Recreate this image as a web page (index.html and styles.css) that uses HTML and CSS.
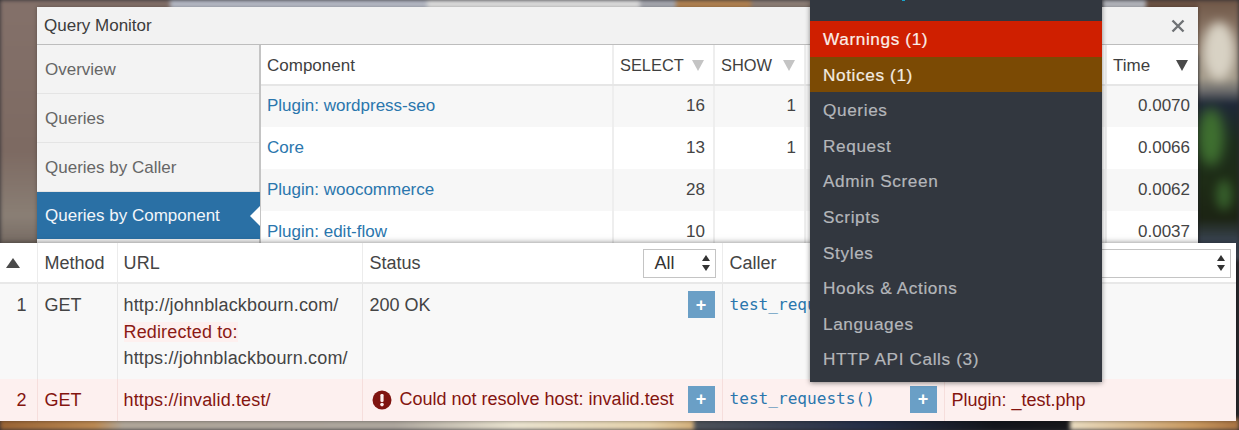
FILE: index.html
```html
<!DOCTYPE html>
<html lang="en">
<head>
<meta charset="utf-8">
<title>Query Monitor</title>
<link rel="stylesheet" href="styles.css">
</head>
<body>
<div class="photo">
  <i class="p1"></i><i class="p2"></i><i class="p2b"></i><i class="p3"></i><i class="p3b"></i><i class="p4"></i>
  <i class="p5"></i><i class="p5a"></i><i class="p5b"></i><i class="p5d"></i><i class="p5c"></i><i class="p5e"></i>
  <i class="p6"></i><i class="p6b"></i><i class="p7"></i><i class="p8"></i>
</div>

<section class="panel">
  <header class="panel-title">
    <span>Query Monitor</span>
    <svg class="close" viewBox="0 0 14 14" width="14" height="14"><path d="M1.5 1.5l11 11M12.5 1.5l-11 11" stroke="#6f7275" stroke-width="2.4" fill="none"/></svg>
  </header>
  <div class="panel-body">
    <nav class="side">
      <a class="side-item">Overview</a>
      <a class="side-item">Queries</a>
      <a class="side-item">Queries by Caller</a>
      <a class="side-item active">Queries by Component</a>
    </nav>
    <table class="qtable">
      <colgroup><col class="c-comp"><col class="c-sel"><col class="c-show"><col class="c-hid"><col></colgroup>
      <thead>
        <tr>
          <th>Component</th>
          <th class="th-caps"><span class="th-sort">SELECT<i class="tri-d light"></i></span></th>
          <th class="th-caps"><span class="th-sort">SHOW<i class="tri-d light"></i></span></th>
          <th></th>
          <th class="th-time"><span class="th-sort">Time<i class="tri-d dark"></i></span></th>
        </tr>
      </thead>
      <tbody>
        <tr><td><a>Plugin: wordpress-seo</a></td><td class="num">16</td><td class="num">1</td><td></td><td class="num">0.0070</td></tr>
        <tr><td><a>Core</a></td><td class="num">13</td><td class="num">1</td><td></td><td class="num">0.0066</td></tr>
        <tr><td><a>Plugin: woocommerce</a></td><td class="num">28</td><td class="num"></td><td></td><td class="num">0.0062</td></tr>
        <tr><td><a>Plugin: edit-flow</a></td><td class="num">10</td><td class="num"></td><td></td><td class="num">0.0037</td></tr>
      </tbody>
    </table>
  </div>
</section>

<section class="requests">
  <table class="rtable">
    <colgroup><col class="r-n"><col class="r-m"><col class="r-u"><col class="r-s"><col class="r-c"><col></colgroup>
    <thead>
      <tr>
        <th class="sort-cell"><i class="tri-u"></i></th>
        <th>Method</th>
        <th class="url">URL</th>
        <th><div class="th-filter">Status<span class="select sel-short">All<i class="updown"></i></span></div></th>
        <th>Caller</th>
        <th><span class="select sel-wide"><i class="updown"></i></span></th>
      </tr>
    </thead>
    <tbody>
      <tr class="row-ok">
        <td class="num">1</td>
        <td>GET</td>
        <td class="url">http://johnblackbourn.com/<br><span class="redir">Redirected to:</span><br>https://johnblackbourn.com/</td>
        <td><div class="cell-btn">200 OK<b class="plus">+</b></div></td>
        <td><code>test_requests()</code></td>
        <td></td>
      </tr>
      <tr class="row-err">
        <td class="num">2</td>
        <td>GET</td>
        <td class="url">https://invalid.test/</td>
        <td><div class="cell-btn"><span class="err"><svg viewBox="0 0 20 20" width="20" height="20"><circle cx="10" cy="10" r="9.5" fill="#7f1410"/><rect x="8.4" y="4" width="3.2" height="8" rx="1.2" fill="#fdf0ef"/><circle cx="10" cy="14.6" r="1.8" fill="#fdf0ef"/></svg>Could not resolve host: invalid.test</span><b class="plus">+</b></div></td>
        <td><div class="cell-btn"><code>test_requests()</code><b class="plus">+</b></div></td>
        <td>Plugin: _test.php</td>
      </tr>
    </tbody>
  </table>
</section>

<aside class="menu">
  <ul>
    <li class="warn">Warnings (1)</li>
    <li class="notice">Notices (1)</li>
    <li>Queries</li>
    <li>Request</li>
    <li>Admin Screen</li>
    <li>Scripts</li>
    <li>Styles</li>
    <li>Hooks &amp; Actions</li>
    <li>Languages</li>
    <li>HTTP API Calls (3)</li>
  </ul>
</aside>
</body>
</html>
```
FILE: styles.css
```css
* { box-sizing: border-box; }
html, body { margin: 0; height: 100%; }
body {
  position: relative;
  width: 1239px;
  height: 430px;
  overflow: hidden;
  font-family: "Liberation Sans", Arial, sans-serif;
  font-size: 17px;
  color: #444;
  background: #2b2b30;
}
.photo { position: absolute; inset: 0; overflow: hidden; filter: blur(2px); }
.photo i { position: absolute; display: block; }
.p1 { left: -5px; top: -5px; width: 175px; height: 260px; background: linear-gradient(180deg, #84716a, #7d6a62 60%, #8a7f75 85%, #6f635c); }
.p2 { left: 170px; top: -5px; width: 257px; height: 30px; background: #b8bcc8; }
.p2b { left: 427px; top: -5px; width: 213px; height: 30px; background: #e0e0e0; }
.p3 { left: 640px; top: -5px; width: 36px; height: 30px; background: #a8aab2; }
.p3b { left: 676px; top: -5px; width: 75px; height: 30px; background: #b48452; }
.p4 { left: 751px; top: -5px; width: 100px; height: 30px; background: #8f8078; }
.p5 { left: 1102px; top: -5px; width: 44px; height: 30px; background: #b6b8bf; }
.p5a { left: 1146px; top: -5px; width: 60px; height: 60px; background: #6d5344; }
.p5b { left: 1198px; top: 0; width: 50px; height: 260px; background: linear-gradient(180deg, #6f5646 0, #8a7666 12%, #a39a8a 30%, #6c6c6c 35%, #1f2838 40%, #1c2c1c 55%, #1e2c16 70%, #1c2414 84%, #3f4a5c 94%, #4c5566 100%); }
.p5d { left: 1203px; top: 22px; width: 32px; height: 58px; border-radius: 50%; background: #d8d2c4; filter: blur(5px); }
.p5c { left: 1198px; top: 108px; width: 26px; height: 58px; border-radius: 50%; background: #3f7030; filter: blur(6px); }
.p5e { left: 1216px; top: 180px; width: 16px; height: 30px; border-radius: 50%; background: #37602c; filter: blur(5px); }
.p6 { left: -5px; top: 418px; width: 400px; height: 20px; background: linear-gradient(90deg, #9c6434, #c08d55 25%, #b5ab9e 32%, #b3aca3); }
.p6b { left: 395px; top: 418px; width: 299px; height: 20px; background: linear-gradient(90deg, #b3aca3, #f1ead6 40%, #ecd8b0 85%, #d9b47e); }
.p7 { left: 694px; top: 418px; width: 376px; height: 20px; background: linear-gradient(90deg, #50545c, #26304a 45%, #14161c 80%, #17171b); }
.p8 { left: 1070px; top: 418px; width: 175px; height: 20px; background: linear-gradient(90deg, #f1e3c6, #cf9e63 70%, #a87040); }

/* Query panel window */
.panel {
  position: absolute;
  left: 37px;
  top: 7px;
  width: 1161px;
  height: 237px;
  background: #fff;
  box-shadow: 0 0 4px rgba(0,0,0,.3);
  overflow: hidden;
}
.panel-title {
  display: flex;
  align-items: center;
  justify-content: space-between;
  height: 38px;
  padding: 1px 13px 0 7px;
  background: #f2f2f2;
  border-bottom: 1px solid #bdbdbd;
  color: #3c3c3c;
}
.close { display: block; }
.panel-body { display: flex; height: 199px; }
.side {
  flex: 0 0 224px;
  background: #f3f3f3;
  border-right: 2px solid #c4c4c4;
  display: flex;
  flex-direction: column;
}
.side-item {
  display: flex;
  align-items: center;
  height: 49px;
  padding: 2px 8px 0;
  color: #666;
  border-bottom: 1px solid #e4e4e4;
}
.side-item.active {
  position: relative;
  height: 47px;
  margin-right: -1px;
  padding-top: 0;
  background: #2a70a5;
  color: #f2f6fa;
  border-bottom: 0;
}
.side-item.active::after {
  content: "";
  position: absolute;
  right: 0;
  top: 14px;
  border: 10px solid transparent;
  border-right: 10px solid #fff;
  border-left: 0;
}
.qtable {
  flex: 1 1 auto;
  table-layout: fixed;
  border-collapse: collapse;
  height: 0;
}
.c-comp { width: 352px; }
.c-sel { width: 101px; }
.c-show { width: 91px; }
.c-hid { width: 301px; }
.qtable th {
  height: 40px;
  padding: 2px 9px 0 7px;
  text-align: left;
  font-weight: 400;
  color: #3f3f3f;
  border-bottom: 2px solid #e6e6e6;
  border-left: 2px solid #eeeeee;
}
.qtable .th-caps { padding-left: 6px; font-size: 16.4px; }
.qtable .th-time { padding-left: 6px; padding-right: 10px; }
.qtable th:first-child, .qtable td:first-child { border-left: 0; padding-left: 6px; }
.qtable td {
  height: 42px;
  padding: 0 8px 1px;
  border-left: 2px solid #eeeeee;
  color: #444;
}
.qtable tbody tr:nth-child(odd) td { background: #f7f7f7; }
.qtable a { color: #2a76ad; }
.num { text-align: right; }
.th-sort { display: flex; align-items: center; justify-content: space-between; }
.tri-d {
  display: block;
  width: 0;
  height: 0;
  border-left: 6.5px solid transparent;
  border-right: 6.5px solid transparent;
  border-top: 11px solid #c4c4c4;
  margin-left: 8px;
}
.tri-d.dark { border-top-color: #4a4a4a; }
.tri-u {
  display: block;
  width: 0;
  height: 0;
  margin: 0 auto 0 6px;
  border-left: 7px solid transparent;
  border-right: 7px solid transparent;
  border-bottom: 10px solid #4a4a4a;
}

/* Requests window */
.requests {
  position: absolute;
  left: 0;
  top: 243px;
  width: 1236px;
  height: 177px;
  background: #fff;
  box-shadow: 0 0 6px rgba(0,0,0,.5);
}
.rtable { width: 100%; height: 100%; table-layout: fixed; border-collapse: collapse; font-size: 18px; }
.r-n { width: 37px; }
.r-m { width: 80px; }
.r-u { width: 245px; }
.r-s { width: 360px; }
.r-c { width: 222px; }
.rtable th {
  height: 40px;
  padding: 1px 7px 0;
  text-align: left;
  font-weight: 400;
  color: #444;
  border-left: 1px solid #ececec;
  border-bottom: 2px solid #e8e8e8;
}
.rtable th.sort-cell { padding: 0; }
.rtable th:first-child, .rtable td:first-child { border-left: 0; }
.rtable td {
  padding: 8px 7px 7px;
  vertical-align: top;
  border-left: 1px solid #e6e6e6;
  line-height: 26.5px;
  color: #444;
}
.rtable td.num { padding-right: 10px; }
.rtable .url { padding-left: 6px; letter-spacing: .15px; white-space: nowrap; }
.row-ok { height: 95px; }
.row-ok td { background: #f8f8f8; }
.row-err { height: 42px; }
.row-err td { background: #fdf0ef; color: #84150f; border-left-color: #f6dedc; }
.redir { background: #fdf0ef; color: #8b1a15; }
.th-filter { display: flex; align-items: center; justify-content: space-between; }
.select {
  display: flex;
  align-items: center;
  justify-content: space-between;
  height: 29px;
  padding: 0 5px 0 11px;
  border: 1.5px solid #c4c4c4;
  color: #333;
  background: #fff;
}
.sel-short { width: 73px; margin-right: -1px; }
.sel-wide { width: 279px; }
.sel-wide .updown { margin-left: auto; }
.updown { position: relative; display: block; width: 8px; height: 16px; }
.updown::before, .updown::after {
  content: "";
  position: absolute;
  left: 0;
  border-left: 4px solid transparent;
  border-right: 4px solid transparent;
}
.updown::before { top: 0; border-bottom: 6px solid #333; }
.updown::after { bottom: 0; border-top: 6px solid #333; }
.cell-btn { display: flex; justify-content: space-between; align-items: flex-start; }
.plus {
  display: flex;
  align-items: center;
  justify-content: center;
  flex: 0 0 27px;
  width: 27px;
  height: 27px;
  margin: -1px 0 0;
  background: #6a9fc6;
  color: #fff;
  font-size: 18px;
  line-height: 1;
}
code { position: relative; top: -1px; font-family: "DejaVu Sans Mono", monospace; font-size: 16.1px; color: #2a76ad; line-height: 26px; }
.err { display: flex; align-items: center; gap: 8px; height: 26px; padding-left: 2px; white-space: nowrap; }
.err svg { flex: none; }

/* Dark admin-toolbar dropdown */
.menu {
  position: absolute;
  left: 810px;
  top: 0;
  width: 292px;
  height: 382px;
  background: #32373f;
  box-shadow: 0 1px 5px rgba(0,0,0,.45);
  padding-top: 21px;
}
.menu::before {
  content: "";
  position: absolute;
  left: 92px;
  top: 0;
  width: 3px;
  height: 1px;
  background: #19a5cc;
}
.menu ul { list-style: none; margin: 0; padding: 0; }
.menu li {
  height: 35.6px;
  line-height: 37px;
  padding: 0 13px;
  font-size: 17.2px;
  letter-spacing: .62px;
  color: #b4b6ba;
  -webkit-text-stroke: .2px currentColor;
}
.menu .warn { background: #cf1f00; color: #fbeee9; }
.menu .notice { background: #7b4a04; color: #f3ece2; }
```
